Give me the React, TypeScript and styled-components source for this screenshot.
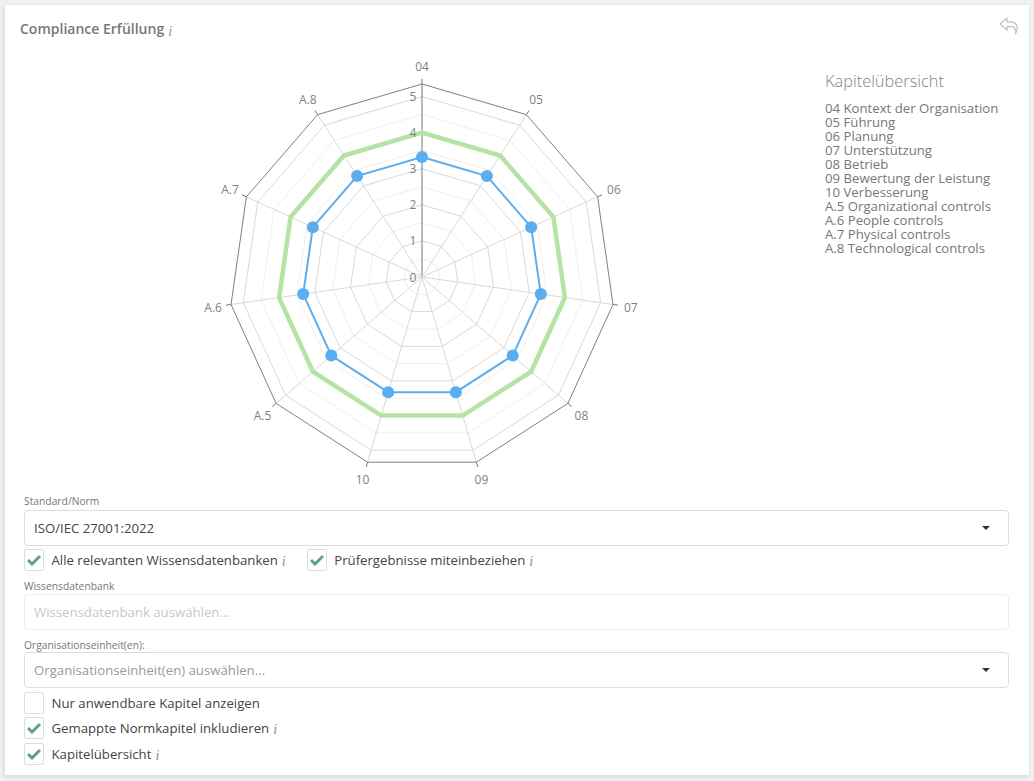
import styled, { createGlobalStyle } from 'styled-components';

const AXES = ['04', '05', '06', '07', '08', '09', '10', 'A.5', 'A.6', 'A.7', 'A.8'];
const CHAPTERS = [
  '04 Kontext der Organisation',
  '05 Führung',
  '06 Planung',
  '07 Unterstützung',
  '08 Betrieb',
  '09 Bewertung der Leistung',
  '10 Verbesserung',
  'A.5 Organizational controls',
  'A.6 People controls',
  'A.7 Physical controls',
  'A.8 Technological controls',
];

const CX = 350;
const CY = 227;
const UNIT = 36.1;
const OUTER = 193;
const LABEL_R = 211;

const point = (i: number, r: number) => {
  const a = (i * 2 * Math.PI) / AXES.length;
  return [CX + r * Math.sin(a), CY - r * Math.cos(a)];
};

const ring = (r: number) => AXES.map((_, i) => point(i, r).map((v) => v.toFixed(1)).join(',')).join(' ');

const GlobalStyle = createGlobalStyle`
  html, body {
    margin: 0;
    background: #f0f0f0;
    font-family: "Open Sans", "Liberation Sans", sans-serif;
  }
`;

const Page = styled.div`
  box-sizing: border-box;
  width: 1034px;
  height: 781px;
  padding: 5px;
`;

const Card = styled.div`
  box-sizing: border-box;
  height: 770px;
  background: #fff;
  box-shadow: -1px 1px 4px rgba(0, 0, 0, 0.12);
  display: flex;
  flex-direction: column;
`;

const Header = styled.div`
  box-sizing: border-box;
  flex: none;
  height: 45px;
  display: flex;
  justify-content: space-between;
  align-items: flex-start;
  padding: 14px 10px 0 15px;
`;

const Title = styled.h1`
  margin: 0;
  font-size: 14px;
  line-height: 20px;
  font-weight: 600;
  color: #777;
`;

const Info = styled.i`
  font-family: "Liberation Serif", serif;
  font-size: 14px;
  font-weight: 400;
  color: #7a95a8;
  margin-left: 4px;
  position: relative;
  top: 2px;
`;

const ChartRow = styled.div`
  flex: none;
  display: flex;
  height: 445px;
  padding-left: 67px;
`;

const ChartSvg = styled.svg`
  display: block;
  flex: none;
`;

const AxisText = styled.text`
  font-size: 12px;
  fill: #7f7f7f;
  text-anchor: middle;
  dominant-baseline: central;
`;

const Legend = styled.div`
  margin: 20px 0 0 53px;
  color: #777;
`;

const LegendTitle = styled.div`
  font-size: 16.4px;
  line-height: 22px;
  font-weight: 300;
  color: #8a8178;
  margin-bottom: 9px;
`;

const LegendItem = styled.div`
  font-size: 13.2px;
  line-height: 14px;
  white-space: nowrap;
`;

const Form = styled.div`
  flex: none;
  padding: 0 20px 0 19px;
  display: flex;
  flex-direction: column;
`;

const FieldLabel = styled.label<{ $top?: number; $bottom?: number }>`
  display: block;
  font-size: 10.3px;
  line-height: 12px;
  margin-top: ${(p) => p.$top ?? 0}px;
  margin-bottom: ${(p) => p.$bottom ?? 3}px;
  color: #777;
`;

const Control = styled.div<{ $disabled?: boolean }>`
  box-sizing: border-box;
  height: 36px;
  border: 1px solid ${(p) => (p.$disabled ? '#eee' : '#ddd')};
  border-radius: 4px;
  padding: 0 9px;
  display: flex;
  align-items: center;
  justify-content: space-between;
  font-size: 13.2px;
  color: ${(p) => (p.$disabled ? '#c8c8c8' : '#999')};
`;

const Value = styled.span`
  color: #444;
`;

const Caret = styled.span`
  width: 0;
  height: 0;
  margin-right: 9px;
  border-left: 4px solid transparent;
  border-right: 4px solid transparent;
  border-top: 4px solid #333;
`;

const CheckRow = styled.div<{ $top: number }>`
  display: flex;
  gap: 21px;
  margin-top: ${(p) => p.$top}px;
`;

const CheckItem = styled.div`
  display: flex;
  align-items: center;
  height: 22px;
  font-size: 13.2px;
  color: #444;
`;

const Box = styled.span`
  box-sizing: border-box;
  width: 20px;
  height: 22px;
  margin-right: 7.5px;
  border: 1px solid #ddd;
  border-radius: 2px;
  display: flex;
  align-items: center;
  justify-content: center;
`;

const Check = ({ label, checked = true, info = true }: { label: string; checked?: boolean; info?: boolean }) => (
  <CheckItem>
    <Box>
      {checked && (
        <svg width="14" height="12" viewBox="0 0 14 12">
          <path d="M1 6 L5 10 L13 2" fill="none" stroke="#5b9f8f" strokeWidth="3" />
        </svg>
      )}
    </Box>
    {label}
    {info && <Info>i</Info>}
  </CheckItem>
);

const BackArrow = styled.svg`
  margin-top: -2px;
`;

const BackIcon = () => (
  <BackArrow width="20" height="18" viewBox="0 0 20 18">
    <path
      d="M8 1 L1 7 L8 13 V9.5 H12 C15 9.5 17 11 16.5 16.5 C19 13 19.5 5.5 12 5 H8 Z"
      fill="none"
      stroke="#c4c4c4"
      strokeWidth="1.3"
      strokeLinejoin="round"
    />
  </BackArrow>
);

const RadarChart = () => {
  const blue = AXES.map((_, i) => point(i, 120));
  return (
    <ChartSvg width="700" height="445" viewBox="0 0 700 445">
      {[0.5, 1.5, 2.5, 3.5, 4.5].map((v) => (
        <polygon key={v} points={ring(v * UNIT)} fill="none" stroke="#efefef" />
      ))}
      {[1, 2, 3, 4, 5].map((v) => (
        <polygon key={v} points={ring(v * UNIT)} fill="none" stroke="#d9d9d9" />
      ))}
      {AXES.map((_, i) => {
        const [x, y] = point(i, OUTER);
        const [tx, ty] = point(i, OUTER + 5);
        return (
          <g key={i}>
            <line x1={CX} y1={CY} x2={x} y2={y} stroke={i === 0 ? '#777' : '#d9d9d9'} />
            <line x1={x} y1={y} x2={tx} y2={ty} stroke="#777" />
          </g>
        );
      })}
      <polygon points={ring(OUTER)} fill="none" stroke="#808080" />
      <polygon points={ring(4 * UNIT)} fill="none" stroke="#b5e3a3" strokeWidth="4.5" />
      <polygon points={blue.map((p) => p.join(',')).join(' ')} fill="none" stroke="#5aaef0" strokeWidth="2" />
      {blue.map(([x, y], i) => (
        <circle key={i} cx={x} cy={y} r="6" fill="#5aaef0" />
      ))}
      {[0, 1, 2, 3, 4, 5].map((v) => (
        <AxisText key={v} x={CX - 9} y={CY - v * UNIT}>
          {v}
        </AxisText>
      ))}
      {AXES.map((a, i) => {
        const [x, y] = point(i, LABEL_R);
        return (
          <AxisText key={a} x={x} y={y}>
            {a}
          </AxisText>
        );
      })}
    </ChartSvg>
  );
};

export default function App() {
  return (
    <Page>
      <GlobalStyle />
      <Card>
        <Header>
          <Title>
            Compliance Erfüllung
            <Info>i</Info>
          </Title>
          <BackIcon />
        </Header>
        <ChartRow>
          <RadarChart />
          <Legend>
            <LegendTitle>Kapitelübersicht</LegendTitle>
            {CHAPTERS.map((c) => (
              <LegendItem key={c}>{c}</LegendItem>
            ))}
          </Legend>
        </ChartRow>
        <Form>
          <FieldLabel>Standard/Norm</FieldLabel>
          <Control>
            <Value>ISO/IEC 27001:2022</Value>
            <Caret />
          </Control>
          <CheckRow $top={3}>
            <Check label="Alle relevanten Wissensdatenbanken" />
            <Check label="Prüfergebnisse miteinbeziehen" />
          </CheckRow>
          <FieldLabel $top={9} $bottom={2}>
            Wissensdatenbank
          </FieldLabel>
          <Control $disabled>Wissensdatenbank auswählen...</Control>
          <FieldLabel $top={9} $bottom={1}>
            Organisationseinheit(en):
          </FieldLabel>
          <Control>
            Organisationseinheit(en) auswählen...
            <Caret />
          </Control>
          <CheckRow $top={4}>
            <Check label="Nur anwendbare Kapitel anzeigen" checked={false} info={false} />
          </CheckRow>
          <CheckRow $top={3}>
            <Check label="Gemappte Normkapitel inkludieren" />
          </CheckRow>
          <CheckRow $top={4}>
            <Check label="Kapitelübersicht" />
          </CheckRow>
        </Form>
      </Card>
    </Page>
  );
}
